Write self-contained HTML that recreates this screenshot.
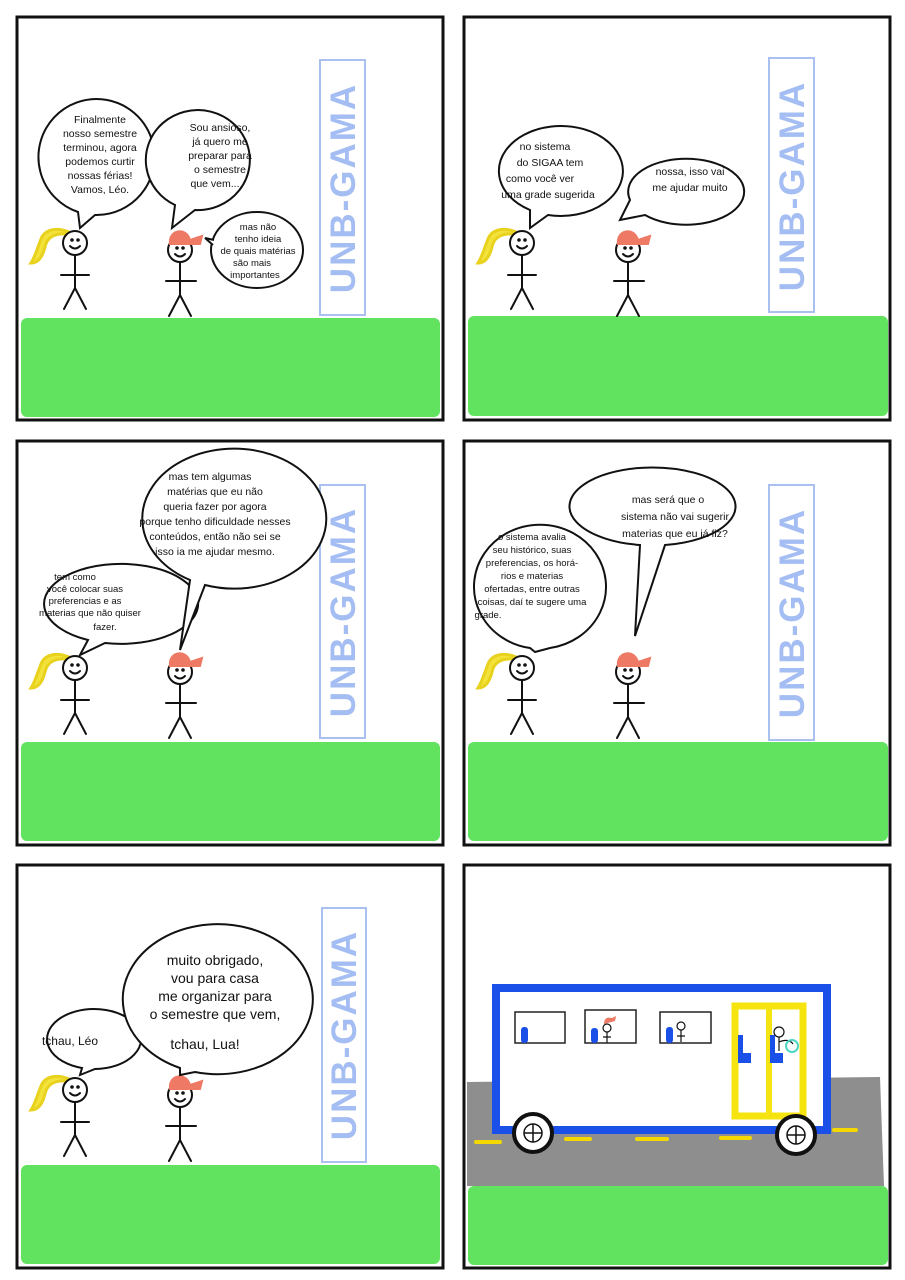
<!DOCTYPE html>
<html><head><meta charset="utf-8"><style>
html,body{margin:0;padding:0;background:#fff}
svg{display:block}
text{font-family:"Liberation Sans",sans-serif;fill:#111}
</style></head><body>
<svg width="905" height="1280" viewBox="0 0 905 1280" xmlns="http://www.w3.org/2000/svg">
<defs>
<g id="girl" stroke="#111" stroke-width="2" fill="none" stroke-linecap="round">
<path d="M-6,-11 C-18,-16 -30,-14 -34,-4 C-38,6 -40,14 -44,20 C-36,20 -32,12 -30,4 C-28,-6 -20,-10 -8,-9" fill="#f2e23a" stroke="#e8d21e" stroke-width="3"/>
<circle cx="0" cy="0" r="12" fill="#fff"/>
<circle cx="-3" cy="-3" r="0.8" fill="#111"/><circle cx="3" cy="-3" r="0.8" fill="#111"/>
<path d="M-5,3 Q0,8 5,3"/>
<path d="M0,12 V45 M-14,32 H14 M0,45 L-11,66 M0,45 L11,66"/>
</g>
<g id="boy" stroke="#111" stroke-width="2" fill="none" stroke-linecap="round">
<circle cx="0" cy="0" r="12" fill="#fff"/>
<path d="M-10,-6 C-12,-20 6,-24 10,-10 L22,-14 L20,-6 L8,-6 Z" fill="#ee7a66" stroke="#ee7a66"/>
<circle cx="-3" cy="-2" r="0.8" fill="#111"/><circle cx="3" cy="-2" r="0.8" fill="#111"/>
<path d="M-5,4 Q0,9 5,4"/>
<path d="M0,12 V45 M-14,31 H16 M0,45 L-11,66 M0,45 L11,66"/>
</g>
</defs>
<g fill="none" stroke="#111" stroke-width="3">
<rect x="17" y="17" width="426" height="403"/><rect x="464" y="17" width="426" height="403"/>
<rect x="17" y="441" width="426" height="404"/><rect x="464" y="441" width="426" height="404"/>
<rect x="17" y="865" width="426" height="403"/><rect x="464" y="865" width="426" height="403"/>
</g>
<g fill="#62e35f">
<rect x="21" y="318" width="419" height="99" rx="6"/><rect x="468" y="316" width="420" height="100" rx="6"/>
<rect x="21" y="742" width="419" height="99" rx="6"/><rect x="468" y="742" width="420" height="99" rx="6"/>
<rect x="21" y="1165" width="419" height="99" rx="6"/>
</g>
<g fill="none" stroke="#a9c0f0" stroke-width="2">
<rect x="320" y="60" width="45" height="255"/><rect x="769" y="58" width="45" height="254"/>
<rect x="320" y="485" width="45" height="253"/><rect x="769" y="485" width="45" height="255"/>
<rect x="322" y="908" width="44" height="254"/>
</g>
<g style="font-family:'Liberation Sans',sans-serif;font-weight:bold;font-size:35px" text-anchor="middle">
<text transform="translate(355,188) rotate(-90)" style="fill:#a4bdf2;letter-spacing:2px">UNB-GAMA</text>
<text transform="translate(804,186) rotate(-90)" style="fill:#a4bdf2;letter-spacing:2px">UNB-GAMA</text>
<text transform="translate(355,612) rotate(-90)" style="fill:#a4bdf2;letter-spacing:2px">UNB-GAMA</text>
<text transform="translate(804,613) rotate(-90)" style="fill:#a4bdf2;letter-spacing:2px">UNB-GAMA</text>
<text transform="translate(356,1035) rotate(-90)" style="fill:#a4bdf2;letter-spacing:2px">UNB-GAMA</text>
</g>
<use href="#girl" x="75" y="243"/><use href="#boy" x="180" y="250"/>
<use href="#girl" x="522" y="243"/><use href="#boy" x="628" y="250"/>
<use href="#girl" x="75" y="668"/><use href="#boy" x="180" y="672"/>
<use href="#girl" x="522" y="668"/><use href="#boy" x="628" y="672"/>
<use href="#girl" x="75" y="1090"/><use href="#boy" x="180" y="1095"/>
<g fill="#fff" stroke="#111" stroke-width="2">
<path d="M80,228 L78,212 A58,58 0 1 1 95,215 Z"/>
<path d="M172,228 L175,205 A52,50 0 1 1 195,210 Z"/>
<ellipse cx="257" cy="250" rx="46" ry="38"/><path d="M213,245 L205,238 L214,240"/>
<path d="M530,228 L530,210 A62,45 0 1 1 548,215 Z"/>
<path d="M620,220 L630,200 A58,33 0 1 1 645,215 Z"/>
<path d="M80,655 L88,640 A77,40 0 1 1 105,643 Z"/>
<path d="M180,650 L190,580 A92,70 0 1 1 205,585 Z"/>
<path d="M535,652 L530,648 A66,62 0 1 1 550,648 Z"/>
<path d="M635,636 L640,545 A83,39 0 1 1 665,545 Z"/>
<path d="M80,1075 L82,1068 A47,30 0 1 1 95,1069 Z"/>
<path d="M180,1075 L180,1068 A95,75 0 1 1 195,1072 Z"/>
</g>
<g font-size="10.5" text-anchor="middle">
<text x="100" y="123">Finalmente</text><text x="100" y="137">nosso semestre</text><text x="100" y="151">terminou, agora</text><text x="100" y="165">podemos curtir</text><text x="100" y="179">nossas férias!</text><text x="100" y="193">Vamos, Léo.</text>
<text x="220" y="131">Sou ansioso,</text><text x="220" y="145">já quero me</text><text x="220" y="159">preparar para</text><text x="220" y="173">o semestre</text><text x="215" y="187">que vem...</text>
<text x="258" y="230" font-size="9.5">mas não</text><text x="258" y="242" font-size="9.5">tenho ideia</text><text x="258" y="254" font-size="9.5">de quais matérias</text><text x="252" y="266" font-size="9.5">são mais</text><text x="255" y="278" font-size="9.5">importantes</text>
<text x="545" y="150">no sistema</text><text x="550" y="166">do SIGAA tem</text><text x="540" y="182">como você ver</text><text x="548" y="198">uma grade sugerida</text>
<text x="690" y="175">nossa, isso vai</text><text x="690" y="191">me ajudar muito</text>
<text x="210" y="480">mas tem algumas</text><text x="215" y="495">matérias que eu não</text><text x="215" y="510">queria fazer por agora</text><text x="215" y="525">porque tenho dificuldade nesses</text><text x="215" y="540">conteúdos, então não sei se</text><text x="215" y="555">isso ia me ajudar mesmo.</text>
<text x="75" y="580" font-size="9.5">tem como</text><text x="85" y="592" font-size="9.5">você colocar suas</text><text x="85" y="604" font-size="9.5">preferencias e as</text><text x="90" y="616" font-size="9.5">materias que não quiser</text><text x="105" y="630" font-size="9.5">fazer.</text>
<text x="532" y="540" font-size="9.5">o sistema avalia</text><text x="532" y="553" font-size="9.5">seu histórico, suas</text><text x="532" y="566" font-size="9.5">preferencias, os horá-</text><text x="532" y="579" font-size="9.5">rios e materias</text><text x="532" y="592" font-size="9.5">ofertadas, entre outras</text><text x="532" y="605" font-size="9.5">coisas, daí te sugere uma</text><text x="488" y="618" font-size="9.5">grade.</text>
<text x="668" y="503">mas será que o</text><text x="675" y="520">sistema não vai sugerir</text><text x="675" y="537">materias que eu já fiz?</text>
<text x="70" y="1045" font-size="12">tchau, Léo</text>
<text x="215" y="965" font-size="14">muito obrigado,</text><text x="215" y="983" font-size="14">vou para casa</text><text x="215" y="1001" font-size="14">me organizar para</text><text x="215" y="1019" font-size="14">o semestre que vem,</text><text x="205" y="1049" font-size="14">tchau, Lua!</text>
</g>
<path d="M467,1082 L880,1077 L884,1186 L467,1186 Z" fill="#8e8e8e"/>
<rect x="468" y="1186" width="420" height="79" rx="6" fill="#62e35f"/>
<rect x="496" y="988" width="331" height="142" fill="#fff" stroke="#1a4fe8" stroke-width="8"/>
<rect x="735" y="1006" width="68" height="110" fill="none" stroke="#f5e40f" stroke-width="7"/>
<line x1="769" y1="1006" x2="769" y2="1116" stroke="#f5e40f" stroke-width="6"/>
<g fill="none" stroke="#222" stroke-width="1.5">
<rect x="515" y="1012" width="50" height="31"/><rect x="585" y="1010" width="51" height="33"/><rect x="660" y="1012" width="51" height="31"/>
</g>
<g fill="#1a4fe8">
<rect x="521" y="1027" width="7" height="16" rx="3"/><rect x="591" y="1028" width="7" height="15" rx="3"/><rect x="666" y="1027" width="7" height="16" rx="3"/>
<path d="M738,1035 h5 v18 h8 v10 h-13 z"/><path d="M770,1035 h5 v18 h8 v10 h-13 z"/>
</g>
<g stroke="#111" stroke-width="1.2" fill="none">
<circle cx="607" cy="1028" r="4" fill="#fff"/><path d="M607,1032 v11 M603,1037 h8"/>
<circle cx="681" cy="1026" r="4" fill="#fff"/><path d="M681,1030 v12 M677,1036 h8"/>
<circle cx="779" cy="1032" r="5" fill="#fff"/><path d="M779,1037 v14 M779,1042 q10,-4 14,2"/>
</g>
<path d="M604,1024 q0,-8 8,-6 l4,-2 l-1,5 z" fill="#ee7a66"/>
<circle cx="792" cy="1046" r="6" fill="none" stroke="#4fd6c6" stroke-width="2"/>
<g stroke="#f5d800" stroke-width="4" stroke-linecap="round">
<line x1="476" y1="1142" x2="500" y2="1142"/><line x1="566" y1="1139" x2="590" y2="1139"/><line x1="637" y1="1139" x2="667" y2="1139"/><line x1="721" y1="1138" x2="750" y2="1138"/><line x1="834" y1="1130" x2="856" y2="1130"/>
</g>
<g fill="#fff" stroke="#111">
<circle cx="533" cy="1133" r="19" stroke-width="4"/><circle cx="533" cy="1133" r="9" stroke-width="1.5"/>
<path d="M524,1133 h18 M533,1124 v18" stroke-width="1.5"/>
<circle cx="796" cy="1135" r="19" stroke-width="4"/><circle cx="796" cy="1135" r="9" stroke-width="1.5"/>
<path d="M787,1135 h18 M796,1126 v18" stroke-width="1.5"/>
</g>
</svg>
</body></html>
